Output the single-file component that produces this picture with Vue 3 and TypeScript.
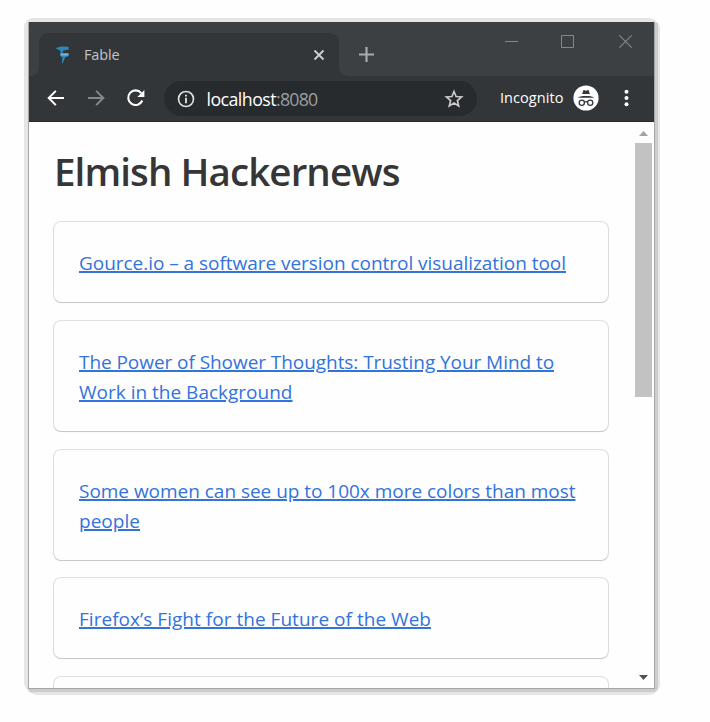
<script setup lang="ts">
import type { Directive } from 'vue'

interface Line {
  text: string
  width: number
}

interface Story {
  id: number
  lines: Line[]
}

const stories: Story[] = [
  { id: 1, lines: [{ text: 'Gource.io – a software version control visualization tool', width: 487 }] },
  {
    id: 2,
    lines: [
      { text: 'The Power of Shower Thoughts: Trusting Your Mind to', width: 475 },
      { text: 'Work in the Background', width: 213.5 },
    ],
  },
  {
    id: 3,
    lines: [
      { text: 'Some women can see up to 100x more colors than most', width: 496.5 },
      { text: 'people', width: 61 },
    ],
  },
  { id: 4, lines: [{ text: 'Firefox’s Fight for the Future of the Web', width: 352 }] },
  { id: 5, lines: [] },
]

// Evens out the tracking so that a label takes the given width.
const vFit: Directive<HTMLElement, number> = {
  mounted(el, { value }) {
    el.style.letterSpacing = '0px'
    const natural = el.getBoundingClientRect().width
    const count = Math.max((el.textContent ?? '').length, 1)
    el.style.letterSpacing = `${(value - natural) / count}px`
  },
}
</script>

<template>
  <div class="desktop">
    <div class="halo">
      <div class="window">
        <header class="strip">
          <div class="edge"></div>
          <div class="tab">
            <svg class="favicon" width="16" height="18" viewBox="0 0 16 18">
              <path d="M.5 2.200C4 .4 10.500 .2 14 1.300L13.700 3.600 8.200 4.600 7.500 7.500H6L5 4.400Z" fill="#2f86b8" />
              <path d="M5.200 7.300 13.800 7.200 13.300 10.300 10.200 11.200 7.600 17.500 6.900 17.300 7.500 11.300 5.400 10.200Z" fill="#3488b6" />
              <path d="M5.600 7.600H13.600L13.200 9.600H5.600Z" fill="#6fb9df" />
            </svg>
            <span v-fit="35.5" class="tab-title">Fable</span>
            <svg class="tab-close" width="12" height="12" viewBox="0 0 12 12">
              <path d="M1.500 1.500 10.500 10.500M10.500 1.500 1.500 10.500" stroke="#d0d1d2" stroke-width="1.800" />
            </svg>
          </div>
          <div class="strip-rest">
            <svg width="16" height="16" viewBox="0 0 16 16">
              <path d="M8.500 1V16M1 8.500H16" stroke="#a9abad" stroke-width="2.200" />
            </svg>
            <div class="controls">
              <svg width="13" height="13" viewBox="0 0 13 13"><path d="M0 6.500H13" stroke="#85888a" /></svg>
              <svg width="13" height="13" viewBox="0 0 13 13"><path d="M.5 .5H12.500V12.500H.5Z" fill="none" stroke="#85888a" /></svg>
              <svg width="13" height="13" viewBox="0 0 13 13"><path d="M.3 .3 12.700 12.700M12.700 .3 .3 12.700" stroke="#85888a" stroke-width="1.100" /></svg>
            </div>
          </div>
        </header>

        <nav class="toolbar">
          <svg class="back" width="18" height="16" viewBox="0 0 18 16">
            <path d="M17 8H2M8.800 .9 1.700 8 8.800 15.100" fill="none" stroke="#fff" stroke-width="2" />
          </svg>
          <svg class="forward" width="18" height="16" viewBox="0 0 18 16">
            <path d="M1 8H16M9.200 .9 16.300 8 9.200 15.100" fill="none" stroke="#85888a" stroke-width="2" />
          </svg>
          <svg class="reload" width="20" height="18" viewBox="0 0 20 18">
            <path d="M15.200 4.100A7.300 7.300 0 1 0 16.300 11.500" fill="none" stroke="#fff" stroke-width="2.100" />
            <path d="M18.400 1V8H11.400Z" fill="#fff" />
          </svg>
          <div class="address">
            <svg class="info" width="18" height="18" viewBox="0 0 18 18">
              <circle cx="9" cy="9" r="7.500" fill="none" stroke="#dcdddd" stroke-width="1.700" />
              <path d="M9 4.700V6.500M9 7.800V13.200" stroke="#dcdddd" stroke-width="1.900" />
            </svg>
            <span class="url"><span v-fit="69.5" class="host">localhost</span><span v-fit="41.5" class="port">:8080</span></span>
            <svg class="star" width="20" height="20" viewBox="0 0 20 20">
              <path d="M10 2.500 12.100 7.500 17.600 8 13.400 11.600 14.700 17 10 14.100 5.300 17 6.600 11.600 2.400 8 7.900 7.500Z" fill="none" stroke="#c8c9ca" stroke-width="1.700" />
            </svg>
          </div>
          <span v-fit="63.5" class="profile">Incognito</span>
          <svg class="avatar" width="26" height="26" viewBox="0 0 26 26">
            <circle cx="13" cy="13" r="12.600" fill="#fff" />
            <path d="M9.100 9 10.300 5.600C10.500 5 11 5 11.500 5.200L13 5.700 14.500 5.200C15 5 15.500 5 15.700 5.600L16.900 9ZM4.800 12.700C6.200 11.500 8 10.900 13 10.900S19.800 11.500 21.200 12.700Z" fill="#35383b" />
            <path d="M11.200 17.300Q13 16.100 14.800 17.300" fill="none" stroke="#35383b" stroke-width="1.200" />
            <circle cx="8.800" cy="17.700" r="2.600" fill="none" stroke="#35383b" stroke-width="1.300" />
            <circle cx="17.200" cy="17.700" r="2.600" fill="none" stroke="#35383b" stroke-width="1.300" />
          </svg>
          <svg class="menu" width="6" height="18" viewBox="0 0 6 18">
            <circle cx="3.500" cy="2.800" r="2" fill="#fff" />
            <circle cx="3.500" cy="9" r="2" fill="#fff" />
            <circle cx="3.500" cy="15.200" r="2" fill="#fff" />
          </svg>
        </nav>

        <div class="viewport">
          <main class="page">
            <h1><span v-fit="345.5">Elmish Hackernews</span></h1>
            <article v-for="story in stories" :key="story.id" class="box">
              <a class="story">
                <span v-for="line in story.lines" :key="line.text" class="row"><span v-fit="line.width" class="line">{{ line.text }}</span></span>
              </a>
            </article>
          </main>
          <aside class="scrollbar">
            <svg width="9" height="5" viewBox="0 0 9 5"><path d="M0 5 4.500 0 9 5Z" fill="#a3a3a3" /></svg>
            <div class="thumb"></div>
            <svg class="down" width="9" height="5" viewBox="0 0 9 5"><path d="M0 0 4.500 5 9 0Z" fill="#505356" /></svg>
          </aside>
        </div>
      </div>
    </div>
  </div>
</template>

<style>
body {
  margin: 0;
  background: #fefefe;
}
</style>

<style scoped>
.desktop {
  box-sizing: border-box;
  width: 710px;
  height: 722px;
  padding: 18px 0 0 24px;
  background: #fefefe;
  font-family: 'Open Sans', 'Noto Sans', sans-serif;
  overflow: hidden;
}
.halo {
  box-sizing: border-box;
  width: 636px;
  height: 677px;
  padding: 4px 5px 6px 4px;
  border-radius: 9px 12px 12px 14px;
  background: #e5e5e5;
}
.window {
  box-sizing: border-box;
  display: flex;
  flex-direction: column;
  width: 627px;
  height: 667px;
  border: 1px solid #a5a7a7;
  border-top: 0;
  background: #fefefe;
  box-shadow: 2px 2px 0 1px #cdcdcd;
  clip-path: inset(0 -3px -3px 0 round 0 0 5px 0);
}
.strip {
  display: flex;
  height: 54px;
  flex: none;
  background: #323639;
}
.edge {
  width: 10px;
  background: #3c4043;
  border-bottom-right-radius: 8px;
}
.tab {
  box-sizing: border-box;
  display: flex;
  align-items: center;
  width: 300px;
  padding: 11px 14px 0 16px;
  background: linear-gradient(#3c4043, #3c4043) 0 0 / 100% 20px no-repeat;
  position: relative;
  z-index: 0;
}
.tab::before {
  content: '';
  position: absolute;
  z-index: -1;
  inset: 11px 0 0;
  border-radius: 9px 9px 0 0;
  background: #323639;
}
.tab-title {
  margin: 0 auto 0 13px;
  font-size: 14.5px;
  line-height: 20px;
  color: #c3c4c5;
}
.strip-rest {
  display: flex;
  flex: 1;
  justify-content: space-between;
  box-sizing: border-box;
  padding: 13px 22px 0 19px;
  border-bottom-left-radius: 9px;
  background: #3c4043;
}
.strip-rest > svg {
  margin-top: 11px;
}
.controls {
  display: flex;
  gap: 44px;
}
.controls svg:nth-child(2) {
  margin: 0 1px 0 -1px;
}
.toolbar {
  box-sizing: border-box;
  display: flex;
  flex: none;
  align-items: center;
  height: 46px;
  padding-left: 18px;
  border-bottom: 1px solid #272a2c;
  background: #323639;
}
.toolbar svg {
  flex: none;
}
.toolbar > svg {
  margin-bottom: 1px;
}
.forward {
  margin-left: 22px;
}
.reload {
  margin-left: 21px;
}
.address {
  display: flex;
  align-items: center;
  box-sizing: border-box;
  width: 313px;
  height: 35px;
  margin-left: 18px;
  padding: 0 13px;
  border-radius: 18px;
  background: #282b2e;
}
.url {
  margin: 0 auto 0 11.5px;
  font-size: 17.8px;
  line-height: 26px;
  white-space: nowrap;
}
.host {
  color: #fff;
}
.port {
  color: #9a9fa3;
}
.profile {
  margin: -1px 0 0 23px;
  font-size: 14.5px;
  line-height: 20px;
  color: #fff;
}
.avatar {
  margin-left: 9.5px;
}
.menu {
  margin-left: 24px;
}
.viewport {
  display: flex;
  flex: 1;
  min-height: 0;
  overflow: hidden;
}
.page {
  box-sizing: border-box;
  width: 606px;
  padding: 24px 27px 0 25px;
}
h1 {
  height: 50px;
  margin: 0 0 26px;
  font-size: 38.5px;
  font-weight: 600;
  line-height: 50px;
  color: #363636;
  white-space: nowrap;
}
.box {
  box-sizing: border-box;
  min-height: 80px;
  margin-bottom: 18.75px;
  padding: 26px 25px 24px;
  border-radius: 7px;
  background: #fefefe;
  box-shadow: 0 1px 1px rgba(10, 10, 10, 0.12), 0 0 0 1px rgba(10, 10, 10, 0.12);
}
.story {
  color: #3273dc;
  font-size: 19px;
  line-height: 30px;
}
.row {
  display: block;
  white-space: nowrap;
}
.line {
  text-decoration: underline;
  text-decoration-thickness: 2px;
  text-underline-offset: 1px;
}
.scrollbar {
  display: flex;
  flex-direction: column;
  align-items: center;
  box-sizing: border-box;
  width: 17px;
  padding: 9px 0 8px;
}
.thumb {
  width: 17px;
  height: 254px;
  margin-top: 7px;
  background: #c2c2c2;
}
.down {
  margin-top: auto;
}
</style>
